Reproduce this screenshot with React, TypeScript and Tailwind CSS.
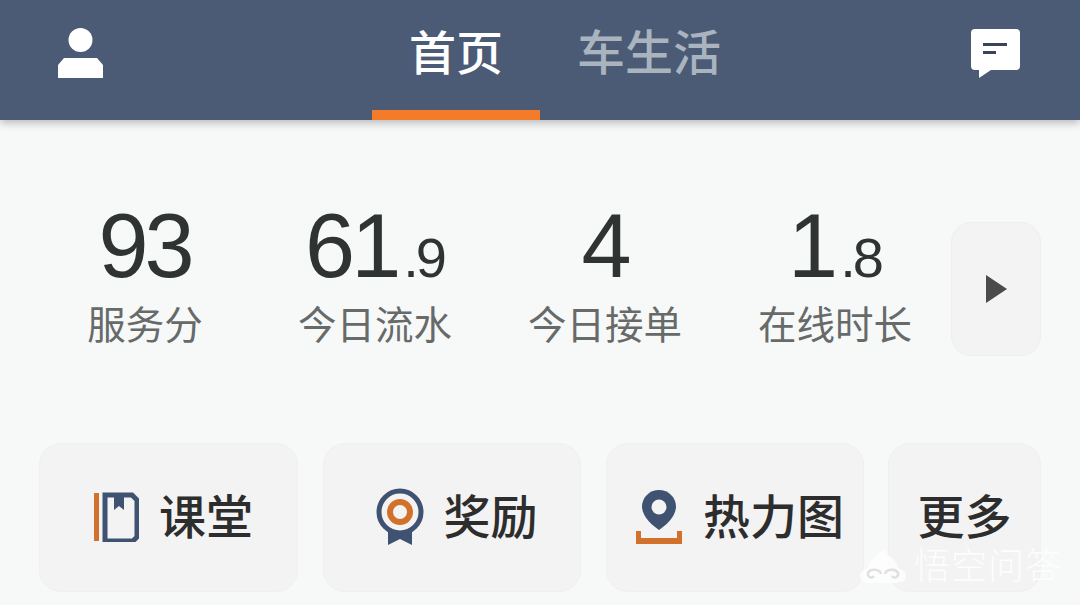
import React from "react";

const CJK = "font-['Roboto','Noto_Sans_CJK_SC',sans-serif]";

const stats = [
  { main: "93", label: "服务分" },
  { main: "61", sub: ".9", label: "今日流水" },
  { main: "4", label: "今日接单" },
  { main: "1", sub: ".8", label: "在线时长" },
];

const UserIcon = () => (
  <svg width="48" height="52" viewBox="0 0 48 52">
    <circle cx="23.5" cy="13" r="12" fill="#fff" />
    <path d="M1 51V38l6-7h33l6 7v13z" fill="#fff" />
  </svg>
);

const ChatIcon = () => (
  <svg width="50" height="50" viewBox="0 0 50 50">
    <path d="M4 0h41a4 4 0 0 1 4 4v33a4 4 0 0 1-4 4H20L8 49v-8H4a4 4 0 0 1-4-4V4a4 4 0 0 1 4-4z" fill="#fff" />
    <rect x="12" y="14" width="24" height="3" fill="#39445a" />
    <rect x="12" y="22" width="13" height="3" fill="#39445a" />
  </svg>
);

const BookIcon = () => (
  <svg width="46" height="50" viewBox="0 0 46 50">
    <rect x="1" y="1" width="5" height="48" fill="#d2712c" />
    <path d="M12 3h27l5 5v37l-4 4H12z" fill="none" stroke="#3f5272" strokeWidth="5" />
    <path d="M21 3h10v15l-5-4-5 4z" fill="#3f5272" />
  </svg>
);

const BadgeIcon = () => (
  <svg width="48" height="58" viewBox="0 0 48 58">
    <path d="M12 40v17l12-6 12 6V40z" fill="#3f5272" />
    <circle cx="24" cy="24" r="21" fill="#f3f3f3" stroke="#3f5272" strokeWidth="5" />
    <circle cx="24" cy="24" r="10" fill="none" stroke="#d2712c" strokeWidth="6" />
  </svg>
);

const PinIcon = () => (
  <svg width="48" height="54" viewBox="0 0 48 54">
    <path d="M24 0c9.500 0 17 7.500 17 16.500C41 27 30 36 24 40 18 36 7 27 7 16.500 7 7.500 14.500 0 24 0z" fill="#3f5272" />
    <circle cx="24" cy="17" r="7.500" fill="#f3f3f3" />
    <path d="M1 41h5v7h36v-7h5v13H1z" fill="#d2712c" />
  </svg>
);

const CloudMark = () => (
  <svg width="46" height="36" viewBox="0 0 46 36">
    <path d="M23 0c4 7 15 11 15 19 5 1 8 5 8 8 0 5-5 7-11 7H11C5 34 0 32 0 27c0-3 3-7 8-8C8 11 19 7 23 0z" fill="#fff" opacity="0.9" />
    <g fill="none" stroke="#dcdddd" strokeWidth="2.500">
      <path d="M21 25c-1-5-11-6-13-1-1 4 4 6 6 3" />
      <path d="M25 25c1-5 11-6 13-1 1 4-4 6-6 3" />
    </g>
  </svg>
);

const Card = ({ className, icon, label }: { className: string; icon?: React.ReactNode; label: string }) => (
  <div className={`flex h-[149px] items-center justify-center gap-[20px] rounded-[22px] border border-[#f0f0f0] bg-[#f3f3f3] pb-[1px] ${icon ? "pl-[9px]" : ""} ${className}`}>
    {icon}
    <span className="text-[47px] leading-none font-medium text-[#2d2d2d]">{label}</span>
  </div>
);

export default function App() {
  return (
    <div className={`relative flex h-[605px] w-[1080px] flex-col overflow-hidden bg-[#f7f8f8] ${CJK}`}>
      <header className="relative flex h-[120px] shrink-0 items-center justify-between bg-[#4b5a75] pr-[59px] pl-[57px] shadow-[0_3px_8px_rgba(0,0,0,0.25)]">
        <div className="mb-[14px]">
          <UserIcon />
        </div>
        <nav className="absolute top-0 left-[372px] flex h-[120px]">
          <div className="flex w-[168px] items-center justify-center border-b-[10px] border-[#f47b2a] pb-[3px] text-[47px] leading-none font-medium text-white">
            首页
          </div>
          <div className="ml-[37px] flex items-center pb-[13px] text-[48px] leading-none font-medium text-[#a9b4bf]">
            车生活
          </div>
        </nav>
        <div className="mb-[12px]">
          <ChatIcon />
        </div>
      </header>

      <section className="mt-[81px] flex items-start pl-[30px]">
        {stats.map((s) => (
          <div key={s.label} className="flex w-[230px] flex-col items-center text-[#2f3433]">
            <div className="flex h-[92px] items-baseline justify-center pr-[1px] font-['Liberation_Sans',sans-serif] leading-none">
              <span className="text-[90px] tracking-[-4px]">{s.main}</span>
              {s.sub && <span className="ml-[6px] text-[56px] tracking-[-3px]">{s.sub}</span>}
            </div>
            <div className="mt-[9px] text-[38.500px] leading-[48px] text-[#666a68]">{s.label}</div>
          </div>
        ))}
        <div className="mt-[21px] ml-[1px] flex h-[134px] w-[90px] items-center justify-center rounded-[20px] border border-[#eeeeee] bg-[#f3f3f3]">
          <svg width="24" height="30" viewBox="0 0 24 30">
            <path d="M2 1l21 14L2 29z" fill="#4a4a4a" />
          </svg>
        </div>
      </section>

      <section className="mt-[87px] flex gap-[25px] pl-[39px]">
        <Card className="w-[259px]" icon={<BookIcon />} label="课堂" />
        <Card className="w-[258px]" icon={<BadgeIcon />} label="奖励" />
        <Card className="w-[258px]" icon={<PinIcon />} label="热力图" />
        <Card className="-ml-[1px] w-[153px]" label="更多" />
      </section>

      <div className="absolute top-[549px] left-[860px] flex items-center gap-[8px] text-white opacity-85">
        <CloudMark />
        <span className="text-[36px] leading-none font-light tracking-[1px]">悟空问答</span>
      </div>
    </div>
  );
}
